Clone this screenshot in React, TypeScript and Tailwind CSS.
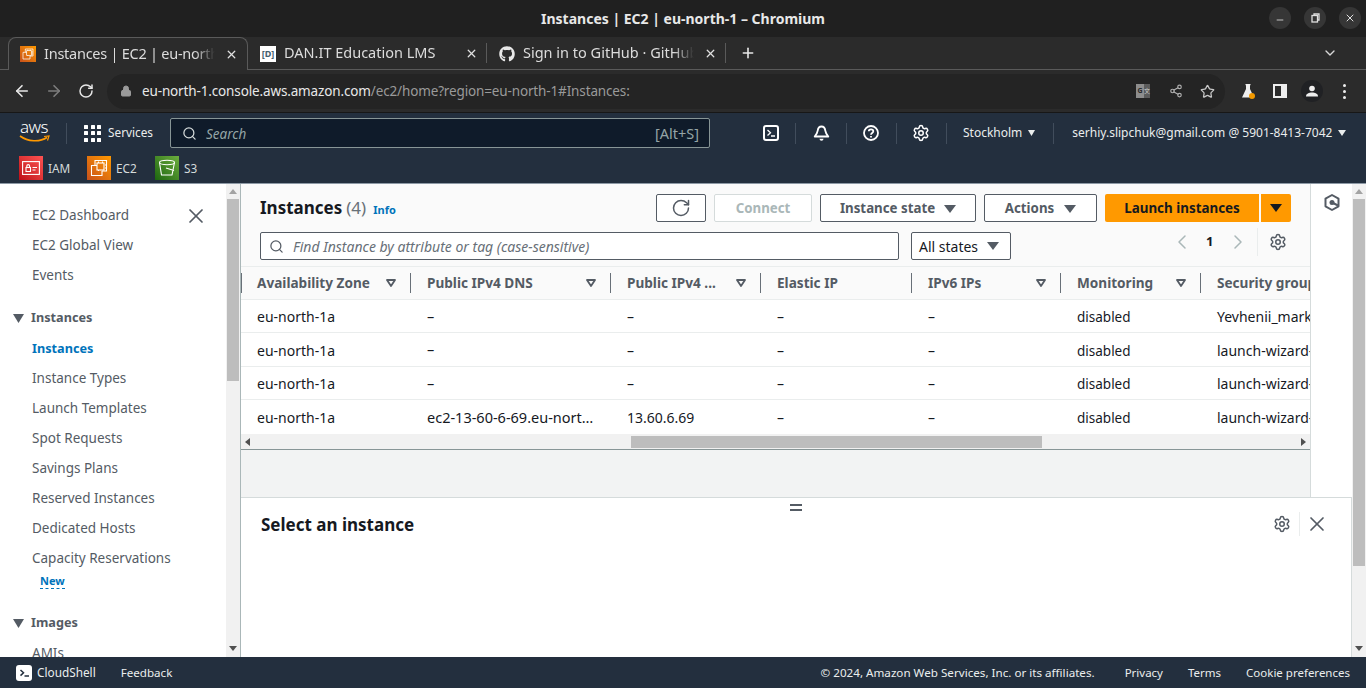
import React from "react";
import { FaGithub } from "react-icons/fa";
import { ArrowLeft, ArrowRight, RotateCw, Lock, Share2, Star, Search, X, Plus, ChevronDown, ChevronLeft, ChevronRight, Settings, Minus } from "lucide-react";

const Caret = ({ w = 12, h = 8, c = "#545b64", className = "" }: { w?: number; h?: number; c?: string; className?: string }) => (
  <svg width={w} height={h} viewBox="0 0 12 8" preserveAspectRatio="none" className={className}><path d="M0 0h12L6 8z" fill={c} /></svg>
);
const Filter = () => (
  <svg width="10" height="8" viewBox="0 0 10 8" className="shrink-0"><path d="M1 1h8L5 7z" fill="none" stroke="#545b64" strokeWidth="1.800" strokeLinejoin="round" /></svg>
);

const columns = [
  ["Availability Zone", true],
  ["Public IPv4 DNS", true],
  ["Public IPv4 ...", true],
  ["Elastic IP", false],
  ["IPv6 IPs", true],
  ["Monitoring", true],
  ["Security group", false],
] as const;

const rows = [
  ["eu-north-1a", "–", "–", "–", "–", "disabled", "Yevhenii_markup"],
  ["eu-north-1a", "–", "–", "–", "–", "disabled", "launch-wizard-1"],
  ["eu-north-1a", "–", "–", "–", "–", "disabled", "launch-wizard-2"],
  ["eu-north-1a", "ec2-13-60-6-69.eu-nort…", "13.60.6.69", "–", "–", "disabled", "launch-wizard-3"],
];
const rowH = ["h-[33px]", "h-[34px]", "h-[33px]", "h-[34px]"];
const cellSize = ["text-[14px]", "text-[14.5px]", "text-[14px]", "text-[14px]", "text-[14px]", "text-[13.5px] pt-[3px]", "text-[14px]"];
const gridCols = "grid grid-cols-[170px_200px_150px_151px_149px_140px_119px]";

const Divider = () => <div className="w-px h-[21px] bg-[#414d5c] shrink-0" />;

function Tab({ icon, label, active, tight }: { icon: React.ReactNode; label: string; active?: boolean; tight?: boolean }) {
  return (
    <div className={`h-[33px] shrink-0 flex items-center relative ${active ? "w-[240px] pl-[11px] -mb-px bg-[#2b2b2b] border border-b-0 border-[#5a5a5a] rounded-t-lg" : "w-[239px] pl-3"}`}>
      <span className="w-4 h-4 shrink-0 flex items-center justify-center">{icon}</span>
      <span className={`ml-2 pb-px w-[171px] overflow-hidden whitespace-nowrap text-[14.5px] text-[#dcdcdc] [mask-image:linear-gradient(to_right,black_88%,transparent)] ${tight ? "tracking-[-0.25px]" : ""}`}>{label}</span>
      <X size={13} strokeWidth={2.4} className="text-[#e0e0e0] shrink-0 ml-[10px]" />
    </div>
  );
}

function Ec2Icon({ s = 24, id = "ec2g" }: { s?: number; id?: string }) {
  return (
    <svg width={s} height={s} viewBox="0 0 24 24">
      <defs><linearGradient id={id} x1="0" y1="1" x2="1" y2="0"><stop offset="0" stopColor="#c8511b" /><stop offset="1" stopColor="#ff9900" /></linearGradient></defs>
      <rect width="24" height="24" fill={`url(#${id})`} />
      <g fill="none" stroke="#fff" strokeWidth="1.100">
        <rect x="10" y="7" width="7" height="7" />
        <path d="M8 9.500V4.500h11.500V15H15M15 15v4.500H4.500V9.500H10" />
        <path d="M11.500 5.500v1.500M15.500 5.500v1.500M11.500 14v1M18 9h1.500M18 12h1.500" />
      </g>
    </svg>
  );
}

function Tile({ children, label, bg }: { children: React.ReactNode; label: string; bg?: string }) {
  return (
    <div className="flex items-center w-[68px]">
      <div className={`w-6 h-6 flex items-center justify-center ${bg ?? ""}`}>{children}</div>
      <span className="ml-[5px] pt-px text-[11.8px] text-[#d5dbdb]">{label}</span>
    </div>
  );
}

const NavItem = ({ children, active }: { children: React.ReactNode; active?: boolean }) => (
  <div className={`h-[30px] flex items-center pl-8 whitespace-nowrap ${active ? "text-[12.7px] font-bold text-[#0073bb]" : "pb-px text-[13.5px] text-[#545b64]"}`}>{children}</div>
);
const NavHead = ({ children }: { children: React.ReactNode }) => (
  <div className="h-[31px] flex items-center pl-[13px] pb-px text-[12.7px] font-bold text-[#545b64]">
    <Caret w={11} h={9} />
    <span className="ml-[7px]">{children}</span>
  </div>
);

const Scroll = ({ thumb }: { thumb: string }) => (
  <div className="w-[14px] shrink-0 h-full bg-[#f1f1f1] flex flex-col items-center">
    <svg width="8" height="5" viewBox="0 0 8 5" className="mt-[5px] shrink-0"><path d="M0 5h8L4 0z" fill="#a3a3a3" /></svg>
    <div className={`w-[12px] mt-[5px] bg-[#bdbdbd] ${thumb}`} />
    <div className="flex-1" />
    <svg width="8" height="5" viewBox="0 0 8 5" className="shrink-0 mb-[6px]"><path d="M0 0h8L4 5z" fill="#505050" /></svg>
  </div>
);

export default function App() {
  return (
    <div className="w-[1366px] h-[688px] overflow-hidden flex flex-col bg-white font-['Noto_Sans','Open_Sans',sans-serif]">
      {/* Title bar */}
      <div className="h-[37px] shrink-0 bg-[#202020] relative flex items-center justify-center">
        <span className="text-[14px] font-bold text-[#e8e8e8]">Instances | EC2 | eu-north-1 – Chromium</span>
        <div className="absolute right-[5px] top-[7px] flex gap-[13px]">
          {[<Minus key="a" size={10} strokeWidth={2} className="mt-[4px]" />, <svg key="b" width="9" height="10" viewBox="0 0 9 10" fill="none" stroke="#e0e0e0" strokeWidth="1.300"><rect x="1" y="2.500" width="5.500" height="6.500" /><path d="M3 2.500V1h5v6H6.500" /></svg>, <X key="c" size={12} strokeWidth={2} />].map((ic, i) => (
            <div key={i} className="w-[22px] h-[22px] rounded-full bg-[#363636] flex items-center justify-center text-[#e0e0e0]">{ic}</div>
          ))}
        </div>
      </div>
      {/* Tab strip */}
      <div className="h-[33px] shrink-0 bg-[#2b2b2b] border-b border-[#5a5a5a] flex pl-2 items-start">
        <Tab active tight label="Instances | EC2 | eu-north" icon={<Ec2Icon s={16} id="ec2tab" />} />
        <Tab label="DAN.IT Education LMS" icon={<span className="w-4 h-4 bg-white flex items-center justify-center text-[9px] font-bold text-[#44606f] leading-none">[D]</span>} />
        <div className="w-px h-5 bg-[#5a5a5a] mt-[6px] -ml-px shrink-0" />
        <Tab label="Sign in to GitHub · GitHub" icon={<FaGithub size={16} color="#e8e8e8" />} />
        <div className="w-px h-5 bg-[#5a5a5a] mt-[6px] -ml-px shrink-0" />
        <Plus size={16} strokeWidth={2.4} className="text-[#e8e8e8] ml-[14px] mt-[8px]" />
        <div className="flex-1" />
        <ChevronDown size={16} strokeWidth={2} className="text-[#d8d8d8] mr-[28px] mt-[8px]" />
      </div>
      {/* Address bar */}
      <div className="h-[43px] shrink-0 bg-[#2b2b2b] flex items-center pl-[13px] border-b border-[#171717]">
        <ArrowLeft size={18} strokeWidth={2.2} className="text-[#e8e8e8]" />
        <ArrowRight size={18} strokeWidth={2.2} className="text-[#7d7d7d] ml-[14px]" />
        <RotateCw size={16} strokeWidth={2.2} className="text-[#e8e8e8] ml-[15px]" />
        <div className="ml-[13px] w-[1118px] h-[35px] rounded-full bg-[#242424] flex items-center pl-[13px] pr-[10px]">
          <Lock size={12} fill="#9a9a9a" strokeWidth={2} className="text-[#9a9a9a]" />
          <span className="ml-[10px] text-[13.5px] tracking-[-0.14px] whitespace-nowrap">
            <span className="text-[#e8e8e8]">eu-north-1.console.aws.amazon.com</span>
            <span className="text-[#9a9a9a]">/ec2/home?region=eu-north-1#Instances:</span>
          </span>
          <div className="flex-1" />
          <div className="flex w-[14px] h-[14px] mr-px">
            <div className="w-[8px] h-[14px] bg-[#8d8d8d] text-[7px] leading-[14px] font-bold text-[#2b2b2b] text-center">G</div>
            <div className="w-[6px] h-[14px] bg-[#5c5c5c] text-[6px] leading-[14px] text-[#d0d0d0] text-center font-['Noto_Sans_CJK_SC',sans-serif]">文</div>
          </div>
          <Share2 size={14} className="text-[#b0b0b0] ml-[18px]" />
          <Star size={15} className="text-[#c8c8c8] ml-[17px]" />
        </div>
        <svg width="14" height="16" viewBox="0 0 14 16" className="ml-[16px]"><path d="M4.500 1h5v1L9 2.500V6l4 8.500H1L5 6V2.500L4.500 2z" fill="#eee" /><circle cx="11" cy="13" r="3" fill="#f29900" /></svg>
        <div className="ml-[18px] w-[14px] h-[14px] border-2 border-[#eee] border-r-[6px]" />
        <div className="ml-[14px] w-[22px] h-[22px] rounded-full bg-[#202124] flex items-center justify-center">
          <svg width="12" height="12" viewBox="0 0 12 12"><circle cx="6" cy="3.500" r="2.800" fill="#eee" /><path d="M0 11.500C0 8.500 3 7.500 6 7.500s6 1 6 4z" fill="#eee" /></svg>
        </div>
        <div className="ml-[20px] flex flex-col gap-[3px]">
          {[0, 1, 2].map((i) => <span key={i} className="w-[3px] h-[3px] rounded-full bg-[#eee]" />)}
        </div>
      </div>
      {/* AWS nav */}
      <div className="h-[71px] shrink-0 bg-[#232f3e] border-b border-[#8d99a5] flex flex-col">
        <div className="h-[40px] flex items-center pl-[18px]">
          <div className="w-[32px] h-[28px] flex flex-col items-center">
            <span className="text-[17px] leading-[16px] text-white tracking-[-0.6px] font-light">aws</span>
            <svg width="31" height="8" viewBox="0 0 31 8"><path d="M1 1c8 6 20 6 27 1.500" fill="none" stroke="#f90" strokeWidth="1.600" /><path d="M25 1.500l5-.5-1.500 4.500" fill="none" stroke="#f90" strokeWidth="1.200" /></svg>
          </div>
          <div className="ml-[16px]"><Divider /></div>
          <div className="ml-[17px] grid grid-cols-3 gap-[2.500px] w-[17px]">
            {Array.from({ length: 9 }).map((_, i) => <span key={i} className="w-1 h-1 bg-white rounded-[0.5px]" />)}
          </div>
          <span className="ml-[7px] text-[11.8px] text-[#eaeded] w-[62px]">Services</span>
          <div className="w-[540px] h-[30px] bg-[#0f1b2a] border border-[#879596] rounded-[2px] flex items-center pl-[11px] pr-[10px]">
            <Search size={15} strokeWidth={2} className="text-[#d5dbdb]" />
            <span className="ml-[9px] pt-[3px] text-[13.5px] italic text-[#95a5a6]">Search</span>
            <div className="flex-1" />
            <span className="pt-[2px] text-[14.5px] text-[#95a5a6]">[Alt+S]</span>
          </div>
          <div className="ml-[53px] w-4 h-4 border-2 border-white rounded-[3px] flex items-center justify-center text-white">
            <svg width="10" height="10" viewBox="0 0 10 10" fill="none" stroke="#fff" strokeWidth="1.300"><path d="M1.500 2l3 2.800-3 2.800M5 8h4" /></svg>
          </div>
          <div className="ml-[16px]"><Divider /></div>
          <svg width="17" height="17" viewBox="0 0 17 17" fill="none" stroke="#fff" strokeWidth="1.800" className="ml-[17px]">
            <path d="M8.500 1.500c2.400 0 3.500 1.800 3.800 4.200.3 2.300 1.300 3.800 3 5.800H1.700c1.700-2 2.700-3.500 3-5.800C5 3.300 6.100 1.500 8.500 1.500z" strokeLinejoin="round" />
            <path d="M6.500 13.800a2 2 0 0 0 4 0z" fill="#fff" stroke="none" />
          </svg>
          <div className="ml-[16px]"><Divider /></div>
          <svg width="16" height="16" viewBox="0 0 16 16" fill="none" stroke="#fff" strokeWidth="1.800" className="ml-[16px]"><circle cx="8" cy="8" r="7" /><path d="M5.800 6.300C5.800 3.800 10.300 3.800 10.300 6.300c0 1.800-2.300 1.700-2.300 3.500M8 11v1.500" /></svg>
          <div className="ml-[17px]"><Divider /></div>
          <Settings size={18} strokeWidth={2} className="text-white ml-[15px]" />
          <div className="ml-[16px]"><Divider /></div>
          <span className="ml-[16px] text-[12px] text-[#eaeded]">Stockholm</span>
          <Caret w={7} h={6} c="#eaeded" className="ml-[6px]" />
          <div className="ml-[18px]"><Divider /></div>
          <span className="ml-[18px] text-[12px] text-[#eaeded] whitespace-nowrap">serhiy.slipchuk@gmail.com @ 5901-8413-7042</span>
          <Caret w={8} h={6} c="#eaeded" className="ml-[6px]" />
        </div>
        <div className="h-[30px] flex items-start pl-[19px] pt-[3px]">
          <Tile label="IAM" bg="bg-gradient-to-tr from-[#bd0816] to-[#ff5252]">
            <svg width="18" height="14" viewBox="0 0 18 14" fill="none" stroke="#fff" strokeWidth="1.100"><rect x=".6" y=".6" width="16.800" height="12.800" /><rect x="4" y="6.500" width="4.500" height="4" /><path d="M4.800 6.500V5a1.400 1.400 0 0 1 2.800 0v1.500M10.500 6.500h4.500M10.500 9h3" /></svg>
          </Tile>
          <Tile label="EC2"><Ec2Icon /></Tile>
          <Tile label="S3" bg="bg-gradient-to-tr from-[#1b660f] to-[#6cae3e]">
            <svg width="18" height="18" viewBox="0 0 18 18" fill="none" stroke="#fff" strokeWidth="1.100"><ellipse cx="9" cy="3.500" rx="7.500" ry="2.200" /><path d="M1.500 3.500L3.500 16h10.500l2.500-12.500M8 9l8 2.500" /></svg>
          </Tile>
        </div>
      </div>
      {/* Body */}
      <div className="flex-1 min-h-0 flex">
        {/* Side navigation */}
        <div className="w-[226px] shrink-0 h-full overflow-hidden bg-white pt-[17px]">
          <div className="relative">
            <NavItem>EC2 Dashboard</NavItem>
            <X size={24} strokeWidth={1.700} className="absolute left-[184px] top-[3px] text-[#545b64]" />
          </div>
          <NavItem>EC2 Global View</NavItem>
          <NavItem>Events</NavItem>
          <div className="h-[12px]" />
          <NavHead>Instances</NavHead>
          <NavItem active>Instances</NavItem>
          <NavItem>Instance Types</NavItem>
          <NavItem>Launch Templates</NavItem>
          <NavItem>Spot Requests</NavItem>
          <NavItem>Savings Plans</NavItem>
          <NavItem>Reserved Instances</NavItem>
          <NavItem>Dedicated Hosts</NavItem>
          <NavItem>Capacity Reservations</NavItem>
          <div className="h-[17px] -mt-[1px] pl-10 flex items-start">
            <span className="text-[11px] leading-[15px] font-bold text-[#0073bb] border-b border-dashed border-[#0073bb]">New</span>
          </div>
          <div className="h-[18px]" />
          <NavHead>Images</NavHead>
          <NavItem>AMIs</NavItem>
        </div>
        <Scroll thumb="h-[182px]" />
        <div className="w-px shrink-0 h-full bg-[#aab7b8]" />
        {/* Main column */}
        <div className="w-[1111px] shrink-0 h-full flex flex-col">
          <div className="h-[313px] shrink-0 flex">
            <div className="w-[1069px] shrink-0 flex flex-col border-r border-[#d5dbdb] box-content">
              {/* Toolbar */}
              <div className="h-[83px] shrink-0 bg-[#fafafa] border-b border-[#eaeded] px-[19px] pt-[10px]">
                <div className="flex items-center h-[28px]">
                  <span className="text-[17px] font-bold text-[#16191f]">Instances</span>
                  <span className="ml-[4px] text-[17px] text-[#687078]">(4)</span>
                  <span className="ml-[7px] mt-[4px] text-[11px] font-bold text-[#0073bb]">Info</span>
                  <div className="flex-1" />
                  <div className="w-[50px] h-[28px] border border-[#545b64] rounded-[2px] bg-white flex items-center justify-center">
                    <RotateCw size={20} strokeWidth={1.800} className="text-[#545b64]" />
                  </div>
                  <div className="ml-2 w-[98px] h-[28px] pt-px border border-[#d5dbdb] rounded-[2px] bg-white flex items-center justify-center text-[13.3px] font-bold text-[#aab7b8]">Connect</div>
                  <div className="ml-2 w-[156px] h-[28px] pt-px border border-[#545b64] rounded-[2px] bg-white flex items-center justify-center text-[13.3px] font-bold text-[#545b64]">
                    Instance state<Caret className="ml-[9px]" />
                  </div>
                  <div className="ml-2 w-[113px] h-[28px] pt-px border border-[#545b64] rounded-[2px] bg-white flex items-center justify-center text-[13.3px] font-bold text-[#545b64]">
                    Actions<Caret className="ml-[10px]" />
                  </div>
                  <div className="ml-2 w-[154px] h-[28px] pt-px rounded-l-[2px] bg-[#ff9900] flex items-center justify-center text-[13.4px] font-bold text-[#16191f]">Launch instances</div>
                  <div className="ml-[2px] w-[30px] h-[28px] rounded-r-[2px] bg-[#ff9900] flex items-center justify-center"><Caret c="#16191f" /></div>
                </div>
                <div className="flex items-center h-[28px] mt-[10px]">
                  <div className="w-[639px] h-[28px] border border-[#545b64] rounded-[2px] bg-white flex items-center pl-2">
                    <Search size={15} strokeWidth={2} className="text-[#545b64]" />
                    <span className="ml-[9px] pt-[1px] text-[14px] italic text-[#687078]">Find Instance by attribute or tag (case-sensitive)</span>
                  </div>
                  <div className="ml-3 w-[100px] h-[28px] border border-[#545b64] rounded-[2px] bg-white flex items-center pl-[7px] text-[14px] text-[#16191f]">
                    All states<Caret className="ml-[9px]" />
                  </div>
                  <ChevronLeft size={24} strokeWidth={1.500} className="text-[#aab7b8] ml-[159px] -mt-[8px]" />
                  <span className="ml-[12px] w-2 -mt-[8px] text-[13px] font-bold text-[#16191f]">1</span>
                  <ChevronRight size={24} strokeWidth={1.500} className="text-[#aab7b8] ml-[12px] -mt-[8px]" />
                  <div className="ml-[7px] -mt-[8px] w-px h-[28px] bg-[#eaeded]" />
                  <Settings size={18} strokeWidth={2} className="text-[#545b64] ml-[11px] -mt-[8px]" />
                </div>
              </div>
              {/* Table */}
              <div className="flex-1 overflow-hidden">
                <div className={`${gridCols} h-[33px] bg-[#fafafa] border-b border-[#eaeded]`}>
                  {columns.map(([name, filter], i) => (
                    <div key={name} className="h-full flex items-center relative pl-4 pr-[15px] overflow-hidden">
                      <span className="text-[13.6px] font-bold text-[#545b64] whitespace-nowrap">{name}</span>
                      <div className="flex-1" />
                      {filter && <Filter />}
                      {i < 6 && <div className="absolute top-[6px] h-5 w-px bg-[#687078] right-0" />}
                      {i === 0 && <div className="absolute left-0 top-[6px] h-5 w-px bg-[#687078]" />}
                    </div>
                  ))}
                </div>
                {rows.map((r, ri) => (
                  <div key={ri} className={`${gridCols} ${rowH[ri]} bg-white ${ri < 3 ? "border-b border-[#eaeded]" : ""}`}>
                    {r.map((c, ci) => (
                      <div key={ci} className={`flex items-center pt-[1px] pl-4 text-[#16191f] whitespace-nowrap overflow-hidden ${cellSize[ci]}`}>{c}</div>
                    ))}
                  </div>
                ))}
                <div className="h-[15px] bg-[#f1f1f1] flex items-center border-b border-[#879596] box-content">
                  <svg width="5" height="8" viewBox="0 0 5 8" className="ml-[4px]"><path d="M5 0v8L0 4z" fill="#505050" /></svg>
                  <div className="ml-[381px] w-[411px] h-[12px] bg-[#bdbdbd]" />
                  <div className="flex-1" />
                  <svg width="5" height="8" viewBox="0 0 5 8" className="mr-[4px]"><path d="M0 0v8l5-4z" fill="#505050" /></svg>
                </div>
                <div className="h-[48px] bg-[#f2f3f3]" />
              </div>
            </div>
            <div className="flex-1 bg-white flex justify-center pt-[9px]">
              <svg width="18" height="19" viewBox="0 0 18 19" fill="none" stroke="#545b64" strokeWidth="2"><path d="M9 2l6.500 3.700v7.600L9 17l-6.500-3.700V5.700z" strokeLinejoin="round" /><circle cx="9" cy="9.500" r="2.500" fill="#545b64" stroke="none" /><path d="M9 9.500l6 3" /></svg>
            </div>
          </div>
          {/* Split panel */}
          <div className="flex-1 min-h-0 bg-white border-t border-r border-[#d5dbdb] relative flex flex-col">
            <div className="absolute left-[549px] top-[6px] w-[12px] h-[7px] border-y-2 border-[#545b64]" />
            <div className="flex items-center h-[52px] pl-5 pr-[22px]">
              <span className="pt-[2px] text-[17px] font-bold text-[#16191f]">Select an instance</span>
              <div className="flex-1" />
              <Settings size={18} strokeWidth={2} className="text-[#545b64]" />
              <div className="w-px h-6 bg-[#eaeded] ml-[8px]" />
              <X size={24} strokeWidth={1.700} className="text-[#545b64] ml-[5px]" />
            </div>
          </div>
        </div>
        <Scroll thumb="h-[367px]" />
      </div>
      {/* Footer */}
      <div className="h-[31px] shrink-0 bg-[#232f3e] flex items-center pl-4 pr-4 text-[11.5px] text-[#eaeded]">
        <div className="w-4 h-4 bg-white rounded-[3px] flex items-center justify-center">
          <svg width="11" height="10" viewBox="0 0 11 10" fill="none" stroke="#232f3e" strokeWidth="1.500"><path d="M1.500 2l3 2.800-3 2.800M5.500 8H10" /></svg>
        </div>
        <span className="ml-[5px] text-[11.8px]">CloudShell</span>
        <span className="ml-[25px] text-[11.6px]">Feedback</span>
        <div className="flex-1" />
        <span className="text-[11.65px]">© 2024, Amazon Web Services, Inc. or its affiliates.</span>
        <span className="ml-[30px]">Privacy</span>
        <span className="ml-[25px]">Terms</span>
        <span className="ml-[25px]">Cookie preferences</span>
      </div>
    </div>
  );
}
